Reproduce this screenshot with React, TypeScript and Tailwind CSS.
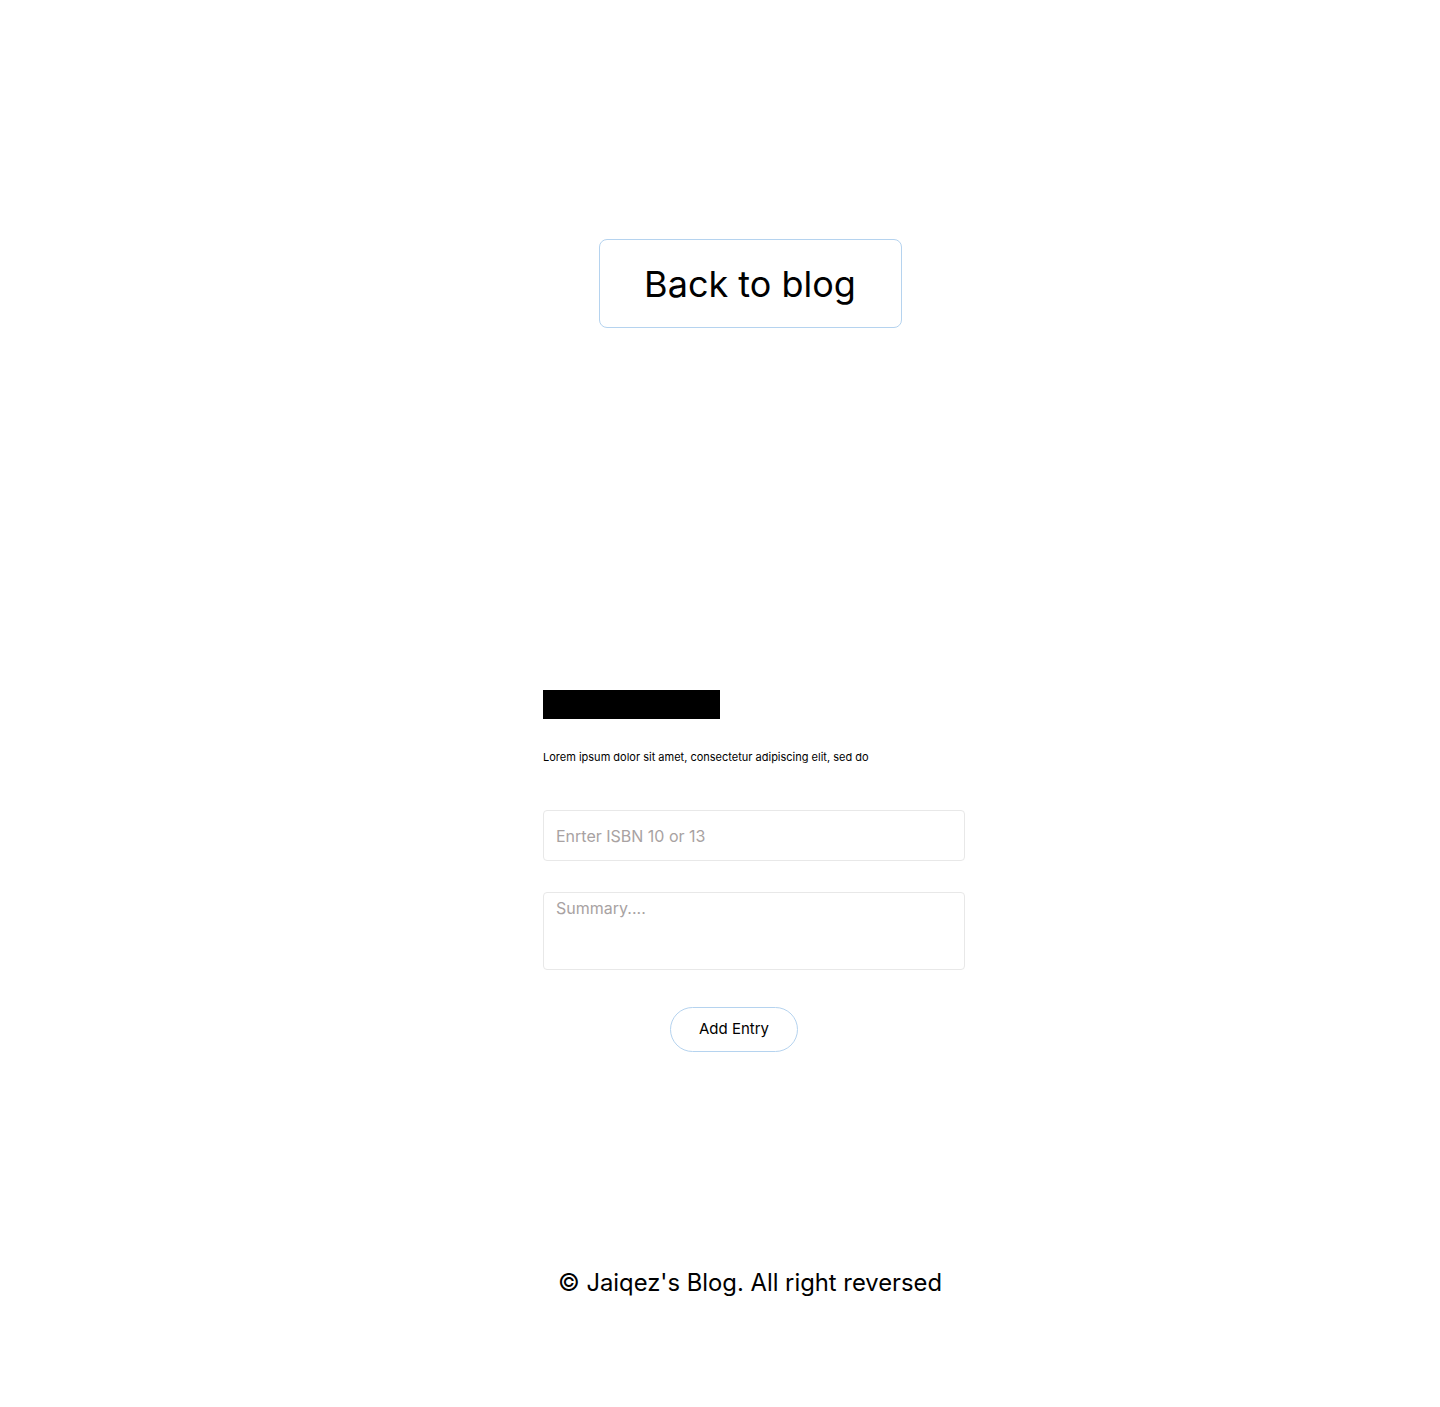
import React from 'react';

const App: React.FC = () => {
  return (
    <div className="min-h-[1407px] w-[1440px] bg-white text-black font-['Inter',sans-serif]">
      <div className="flex justify-center pt-[239px] pl-[60px]">
        <button className="w-[303px] h-[89px] rounded-lg border border-[#b5d3ef] bg-white text-[36px] leading-none text-black">
          Back to blog
        </button>
      </div>

      <form className="ml-[543px] mt-[362px] w-[422px] flex flex-col" onSubmit={(e) => e.preventDefault()}>
        <div className="w-[177px] h-[29px] bg-black" />
        <p className="mt-[32px] text-[11px] leading-[12px] font-['Inter',sans-serif]">
          Lorem ipsum dolor sit amet, consectetur adipiscing elit, sed do
        </p>
        <input
          type="text"
          placeholder="Enrter ISBN 10 or 13"
          className="mt-[47px] h-[51px] w-full rounded border border-[#e8e8e8] px-[12px] text-[16px] outline-none placeholder:text-[#a8a2a2]"
        />
        <textarea
          placeholder="Summary...."
          className="mt-[31px] h-[78px] w-full resize-none rounded border border-[#e8e8e8] px-[12px] pt-[3px] text-[16px] outline-none placeholder:text-[#a8a2a2]"
        />
        <button
          type="submit"
          className="mt-[37px] ml-[127px] w-[128px] h-[45px] rounded-full border border-[#b5d3ef] bg-white text-[15px]"
        >
          Add Entry
        </button>
      </form>

      <footer className="flex justify-center pl-[60px] mt-[215px] pb-[108px]">
        <p className="text-[23.8px] leading-[32px]">© Jaiqez's Blog. All right reversed</p>
      </footer>
    </div>
  );
};

export default App;
